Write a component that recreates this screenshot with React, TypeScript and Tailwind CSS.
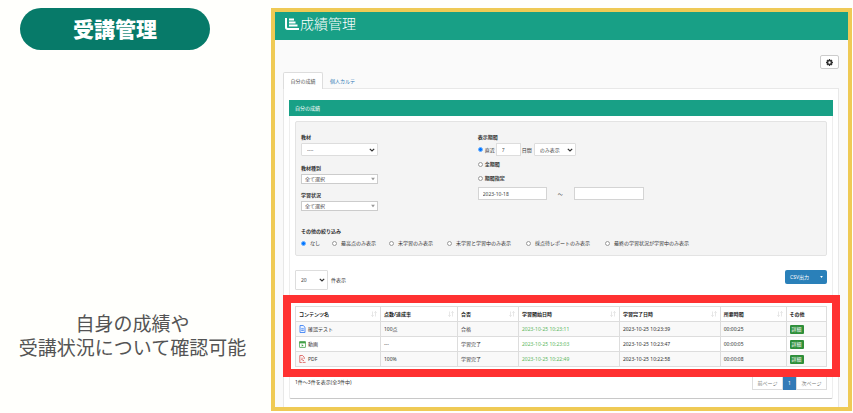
import type { ReactNode } from "react";

const jp = "font-['Noto_Sans','Noto_Sans_CJK_JP',sans-serif]";

function Chevron() {
  return (
    <svg viewBox="0 0 6 4" className="pointer-events-none absolute right-[3px] top-1/2 h-[4px] w-[6px] -translate-y-1/2" fill="none" stroke="#333" strokeWidth="1.2">
      <path d="M0.8 0.8 3 3 5.2 0.8" />
    </svg>
  );
}

function Caret() {
  return (
    <svg viewBox="0 0 4 3" className="pointer-events-none absolute right-[3px] top-1/2 h-[3px] w-[4px] -translate-y-1/2" fill="#999">
      <path d="M0 0h4L2 3z" />
    </svg>
  );
}

function Select({ id, label, value, className, flat }: { id: string; label?: string; value: string; className: string; flat?: boolean }) {
  return (
    <span className={`relative block ${className}`}>
      <select id={id} aria-label={label} className={`block h-full w-full appearance-none border bg-white text-[#444] ${flat ? "border-[#ccc] pl-[3px]" : "rounded-[1px] border-[#ddd] pl-[5px]"}`}>
        <option>{value}</option>
      </select>
      {flat ? <Caret /> : <Chevron />}
    </span>
  );
}

function Radio({ name, checked, tight, children }: { name: string; checked?: boolean; tight?: boolean; children: ReactNode }) {
  return (
    <label className={`flex items-center whitespace-nowrap ${tight ? "gap-[2px]" : "gap-[4px]"}`}>
      <input type="radio" name={name} defaultChecked={checked} className="size-[5px] shrink-0 appearance-none rounded-full border border-[#9a9a9a] bg-white checked:border-[#6db0ff] checked:bg-[#0075ff]" />
      {children}
    </label>
  );
}

function SortIcon() {
  return (
    <svg viewBox="0 0 6 6" className="size-[6px] shrink-0" fill="none" stroke="#dcdcdc" strokeWidth="0.7">
      <path d="M1.5 0.5v5M0.3 4.2 1.5 5.5 2.7 4.2M4.5 5.5v-5M3.3 1.8 4.5 0.5 5.7 1.8" />
    </svg>
  );
}

function TestIcon() {
  return (
    <svg viewBox="0 0 7 8" className="h-[8px] w-[7px] shrink-0" fill="#eef4ff" stroke="#4285f4" strokeWidth="0.9">
      <path d="M1 0.5h3.2L6 2.3v5.2H1z" />
      <path d="M2.2 3.8h2.6M2.2 5.4h2.6" />
    </svg>
  );
}

function MovieIcon() {
  return (
    <svg viewBox="0 0 7 7" className="size-[7px] shrink-0">
      <rect x="0.4" y="0.6" width="6.2" height="5.8" rx="0.5" fill="#fff" stroke="#43a047" strokeWidth="0.8" />
      <path d="M0.4 0.6h6.2v1.8H0.4z" fill="#43a047" />
      <path d="M2.7 3.2v2.4l2-1.2z" fill="#43a047" />
    </svg>
  );
}

function PdfIcon() {
  return (
    <svg viewBox="0 0 7 8" className="h-[8px] w-[7px] shrink-0" fill="none" stroke="#d9534f" strokeWidth="0.8">
      <path d="M5.2 4V2.2L3.6 0.5H0.8v7h2" />
      <path d="M2.2 5.2c1-1 1-2 .8-2.6M2.8 4.4c.6.8 1.4 1.2 2.2 1.2M3.6 7.4h3" />
    </svg>
  );
}

const columns = [
  { name: "コンテンツ名", width: "w-[16%]" },
  { name: "点数/達成率", width: "w-[14.5%]" },
  { name: "合否", width: "w-[11.5%]" },
  { name: "学習開始日時", width: "w-[19%]" },
  { name: "学習完了日時", width: "w-[19%]" },
  { name: "所要時間", width: "w-[12.4%]" },
  { name: "その他", width: "w-[7.6%]" },
];

const rows = [
  { icon: <TestIcon />, name: "確認テスト", score: "100点", result: "合格", start: "2023-10-25 10:23:11", end: "2023-10-25 10:23:39", time: "00:00:25" },
  { icon: <MovieIcon />, name: "動画", score: "---", result: "学習完了", start: "2023-10-25 10:23:03", end: "2023-10-25 10:23:47", time: "00:00:05" },
  { icon: <PdfIcon />, name: "PDF", score: "100%", result: "学習完了", start: "2023-10-25 10:22:49", end: "2023-10-25 10:22:58", time: "00:00:08" },
];

function Filters() {
  return (
    <form className="rounded-[2px] border border-[#e3e3e3] bg-[#f4f4f4] pb-[8px] pt-[11px]">
      <div className="grid grid-cols-3">
        <div className="px-[5px]">
          <label htmlFor="material" className="block font-bold">教材</label>
          <Select id="material" value="----" className="mt-[2px] h-[13px] w-[77px]" />
          <label htmlFor="kind" className="mt-[8px] block font-bold">教材種別</label>
          <Select id="kind" value="全て選択" className="mt-[2px] h-[10px] w-[77px]" flat />
          <label htmlFor="status" className="mt-[7px] block font-bold">学習状況</label>
          <Select id="status" value="全て選択" className="mt-[2px] h-[10px] w-[77px]" flat />
        </div>
        <fieldset className="col-span-2 px-[5px]">
          <legend className="font-bold">表示期間</legend>
          <div className="mt-[2px] flex h-[13px] items-center">
            <Radio name="period" checked tight>直近</Radio>
            <input aria-label="日数" defaultValue="7" className="mx-[1px] h-[13px] w-[25px] border border-[#ddd] bg-white pl-[5px] text-[#555]" />
            日間
            <Select id="mode" label="表示方法" value="のみ表示" className="ml-[2px] h-[13px] w-[42px]" />
          </div>
          <div className="mt-[4px] font-bold"><Radio name="period" tight>全期間</Radio></div>
          <div className="mt-[6px] font-bold"><Radio name="period" tight>期間指定</Radio></div>
          <div className="mt-[5px] flex items-center">
            <input aria-label="開始日" defaultValue="2023-10-18" className="h-[13px] w-[69px] border border-[#d4d4d4] bg-white pl-[4px] text-[#444]" />
            <span className="w-[27px] text-center">～</span>
            <input aria-label="終了日" className="h-[13px] w-[70px] border border-[#d4d4d4] bg-white pl-[4px]" />
          </div>
        </fieldset>
      </div>
      <fieldset className="mt-[16px] px-[5px]">
        <legend className="font-bold">その他の絞り込み</legend>
        <div className="mt-[4px] grid grid-cols-[31px_57px_58px_79px_79px_1fr]">
          <Radio name="narrow" checked>なし</Radio>
          <Radio name="narrow">最高点のみ表示</Radio>
          <Radio name="narrow">未学習のみ表示</Radio>
          <Radio name="narrow">未学習と学習中のみ表示</Radio>
          <Radio name="narrow">採点待レポートのみ表示</Radio>
          <Radio name="narrow">最終の学習状況が学習中のみ表示</Radio>
        </div>
      </fieldset>
    </form>
  );
}

function Results() {
  return (
    <div className="relative mt-[16px]">
      <table className="w-full table-fixed border-collapse border border-[#ddd]">
        <thead>
          <tr className="h-[15px]">
            {columns.map((c, i) => (
              <th key={c.name} className={`${c.width} border border-[#ddd] p-0 px-[3px] text-left font-bold text-[#222]`}>
                <span className="flex items-center justify-between whitespace-nowrap">
                  {c.name}
                  {i < columns.length - 1 && <SortIcon />}
                </span>
              </th>
            ))}
          </tr>
        </thead>
        <tbody>
          {rows.map((r) => (
            <tr key={r.name} className="h-[15px] odd:bg-[#f9f9f9] [&>td]:whitespace-nowrap [&>td]:border [&>td]:border-[#ddd] [&>td]:px-[3px] [&>td]:py-0">
              <td><span className="flex items-center gap-[2px]">{r.icon}{r.name}</span></td>
              <td>{r.score}</td>
              <td>{r.result}</td>
              <td className="text-[#5cb85c]">{r.start}</td>
              <td>{r.end}</td>
              <td>{r.time}</td>
              <td><button type="button" className="block h-[9px] rounded-[1px] bg-[#2f8f3a] px-[2px] text-white">詳細</button></td>
            </tr>
          ))}
        </tbody>
      </table>
      <div className="pointer-events-none absolute -bottom-[10px] -left-[12px] -right-[13px] -top-[11px] border-8 border-[#ff3131]" />
    </div>
  );
}

export default function App() {
  return (
    <div className={`flex min-h-screen bg-[#fffffc] pr-[1px] pt-2 ${jp}`}>
      <aside className="flex w-[271px] shrink-0 flex-col text-[#545454]">
        <h1 className="ml-5 flex h-[42px] w-[190px] items-center justify-center rounded-full bg-[#077a69] font-['Noto_Sans_CJK_JP',sans-serif] text-[21px] font-black text-white">
          受講管理
        </h1>
        <p className="mt-[261px] whitespace-nowrap pr-[6px] text-center font-['Noto_Sans_CJK_JP',sans-serif] text-[19px] leading-[24px]">
          自身の成績や
          <br />
          受講状況について確認可能
        </p>
      </aside>

      <main className="mb-[2px] min-w-0 flex-1 self-start border-4 border-[#efca55] bg-[#fafafa] text-[5px] leading-[8px] text-[#333]">
        <header className="flex h-[28px] items-start gap-[1px] bg-[#18a086] pl-[10px] pt-[3px] text-white">
          <svg viewBox="0 0 14 12" className="mt-[3px] h-[12px] w-[14px]" fill="currentColor">
            <path d="M0 0h2v8.8c0 .8.4 1.200 1.200 1.200H14v2H2.6C1 12 0 11 0 9.500z" />
            <path d="M4 .4h5v2H4zM4 3.400h6.500v2H4zM4 6.400h8.500v2H4z" />
          </svg>
          <h2 className="font-['Noto_Sans_CJK_JP',sans-serif] text-[14px] font-light leading-[16px]">成績管理</h2>
        </header>

        <div className="pl-[8px] pr-[9px]">
          <div className="flex justify-end pt-[15px]">
            <button type="button" aria-label="設定" className="flex h-[14px] w-[19px] items-center justify-center rounded-[2px] border border-[#ccc] bg-white">
              <svg viewBox="0 0 16 16" className="size-[7px]" fill="none" stroke="#333">
                <circle cx="8" cy="8" r="4.500" strokeWidth="3.500" />
                <path d="M8 0v3M8 13v3M0 8h3M13 8h3M2.300 2.300l2.200 2.200M11.500 11.500l2.200 2.200M2.300 13.700l2.200-2.200M11.500 4.500l2.200-2.200" strokeWidth="3" />
              </svg>
            </button>
          </div>
          <nav className="mt-[3px] flex h-[17px]">
            <a href="#own" className="relative flex w-[40px] items-center justify-center whitespace-nowrap rounded-t-[2px] border border-b-0 border-[#ddd] bg-white text-[#555]">自分の成績</a>
            <a href="#chart" className="flex items-center px-[7px] text-[#337ab7]">個人カルテ</a>
          </nav>

          <div className="-mt-px border-x border-t border-[#e8e8e8] bg-white px-[5px] pb-[8px] pt-[11px]">
            <section className="rounded-b-[2px] border-x border-b border-x-[#eee] border-b-[#c8c8c8]">
              <h3 className="-mx-px flex h-[16px] items-center bg-[#18a086] pl-[6px] text-white">自分の成績</h3>
              <div className="px-[5px] pb-[8px] pt-[5px]">
                <Filters />
                <div className="mt-[14px] flex items-start justify-between">
                  <div className="flex items-center gap-[3px]">
                    <Select id="length" value="20" className="h-[20px] w-[33px]" />
                    <label htmlFor="length">件表示</label>
                  </div>
                  <button type="button" className="flex h-[14px] w-[42px] items-center justify-between rounded-[2px] bg-[#2a80b9] pl-[5px] pr-[4px] text-white">
                    CSV出力
                    <svg viewBox="0 0 4 3" className="h-[2px] w-[3px]" fill="currentColor"><path d="M0 0h4L2 3z" /></svg>
                  </button>
                </div>
                <Results />
                <div className="mt-[9px] flex justify-between">
                  <p className="pt-[2px]">1件～3件を表示(全3件中)</p>
                  <div className="flex h-[14px]">
                    <button type="button" className="w-[31px] border border-[#ddd] text-[#777]">前ページ</button>
                    <button type="button" className="w-[13px] bg-[#337ab7] text-white">1</button>
                    <button type="button" className="w-[31px] border border-[#ddd] text-[#777]">次ページ</button>
                  </div>
                </div>
              </div>
            </section>
          </div>
        </div>
      </main>
    </div>
  );
}
